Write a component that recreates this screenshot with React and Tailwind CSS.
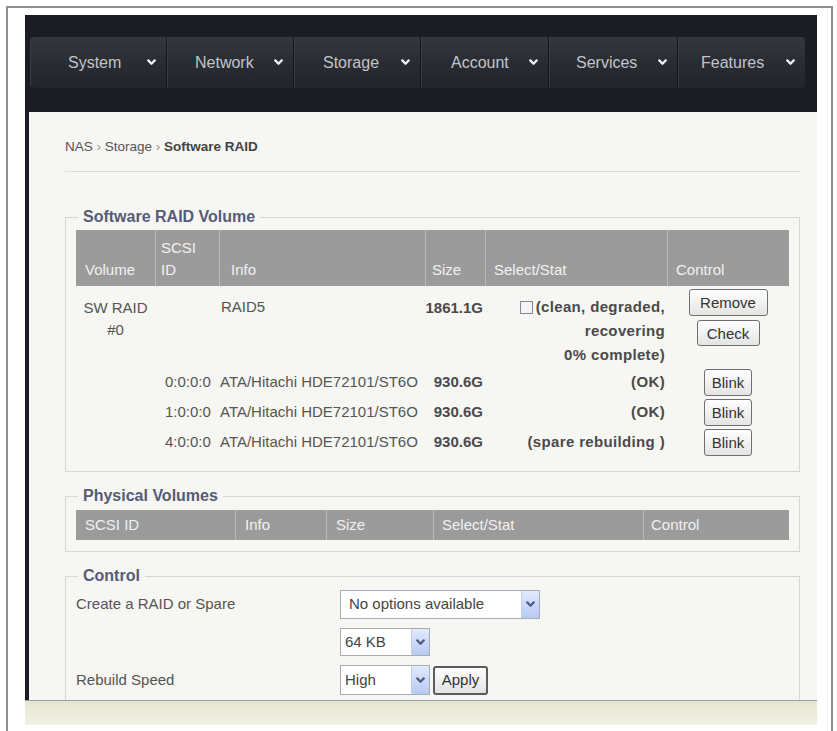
import React from "react";

const Chevron = ({ className = "" }) => (
  <svg width="9" height="7" viewBox="0 0 9 7" className={className}>
    <path
      d="M1.3 1.4 L4.5 4.7 L7.7 1.4"
      fill="none"
      stroke="currentColor"
      strokeWidth="2.3"
      strokeLinecap="round"
      strokeLinejoin="round"
    />
  </svg>
);

const navTabs = [
  { label: "System", cls: "w-[136px] pl-[38px]" },
  { label: "Network", cls: "w-[127px] pl-[28px] border-l border-[#15161b]" },
  { label: "Storage", cls: "w-[127px] pl-[29px] border-l border-[#15161b]" },
  { label: "Account", cls: "w-[128px] pl-[30px] border-l border-[#15161b]" },
  { label: "Services", cls: "w-[129px] pl-[27px] border-l border-[#15161b]" },
  { label: "Features", cls: "w-[128px] pl-[23px] border-l border-[#15161b]" },
];

const Btn = ({ children, className = "" }) => (
  <div
    className={`flex items-center justify-center rounded-[3px] border border-[#6f6f6f] bg-gradient-to-b from-[#ffffff] to-[#e4e4e4] text-[#333] text-[15px] leading-none ${className}`}
  >
    {children}
  </div>
);

const DropBtn = () => (
  <span className="flex h-full w-[18px] items-center justify-center border-l border-[#c3d1ee] bg-gradient-to-b from-[#e2eafc] to-[#b8caf2] text-[#4b5f88]">
    <Chevron />
  </span>
);

const SelectBox = ({ value, className }) => (
  <div className={`flex items-center border border-[#a7adb4] bg-white ${className}`}>
    <span className="flex-1 pl-[4px] text-[15px] text-[#444]">{value}</span>
    <DropBtn />
  </div>
);

const Legend = ({ children }) => (
  <legend className="ml-[2px] px-[5px] text-[16px] leading-[18px] font-bold text-[#575b78]">
    {children}
  </legend>
);

const volCols = "grid grid-cols-[79px_64px_206px_60px_182px_122px]";
const physCols = "grid grid-cols-[159px_91px_107px_210px_146px]";

const disks = [
  { id: "0:0:0:0", stat: "(OK)" },
  { id: "1:0:0:0", stat: "(OK)" },
  { id: "4:0:0:0", stat: "(spare rebuilding )" },
];

export default function App() {
  return (
    <div className="h-[731px] w-[837px] overflow-hidden bg-white font-['Liberation_Sans',Arial,sans-serif]">
      <div className="ml-[6px] mt-[6px] h-[760px] w-[827px] border-2 border-[#8e8e8e] pl-[17px] pt-[7px]">
        <div className="w-[792px]">
          {/* top navigation */}
          <div className="h-[97px] bg-[#1c1d24] pl-[5px] pt-[22px]">
            <div className="flex h-[51px] w-[775px] overflow-hidden rounded-[4px] bg-gradient-to-b from-[#35373f] via-[#2a2c33] to-[#23252b]">
              {navTabs.map((t) => (
                <div
                  key={t.label}
                  className={`flex items-center justify-between pr-[10px] text-[16px] text-[#c2c4c9] shadow-[inset_1px_0_0_#3a3c44] ${t.cls}`}
                >
                  <span>{t.label}</span>
                  <Chevron className="text-[#f0f0f2]" />
                </div>
              ))}
            </div>
          </div>

          {/* page body */}
          <div className="h-[588px] overflow-hidden border-l-4 border-[#1c1d24] bg-[#f6f6f3] pl-[36px] pr-[17px] pt-[27px] text-[15px] text-[#555]">
            <div className="text-[13.5px] leading-[16px] text-[#555]">
              NAS <span className="text-[#999]">›</span> Storage{" "}
              <span className="text-[#999]">›</span>{" "}
              <span className="font-bold text-[#444]">Software RAID</span>
            </div>
            <div className="mt-[16px] h-px bg-[#dcdcdc]" />

            {/* software raid volume */}
            <fieldset className="mt-[36px] border border-[#d6d6d6] px-[10px] pb-[14px]">
              <Legend>Software RAID Volume</Legend>
              <div className={`${volCols} mt-[4px] h-[56px] bg-[#9b9b9b] leading-[22px] text-[#f1f1f1]`}>
                <div className="flex items-end pb-[5px] pl-[9px]">Volume</div>
                <div className="flex flex-col justify-end border-l border-[#bababa] pb-[5px] pl-[5px]">
                  <span>SCSI</span>
                  <span>ID</span>
                </div>
                <div className="flex items-end border-l border-[#bababa] pb-[5px] pl-[11px]">Info</div>
                <div className="flex items-end border-l border-[#bababa] pb-[5px] pl-[6px]">Size</div>
                <div className="flex items-end border-l border-[#bababa] pb-[5px] pl-[8px]">Select/Stat</div>
                <div className="flex items-end border-l border-[#bababa] pb-[5px] pl-[8px]">Control</div>
              </div>

              <div className={volCols}>
                <div className="pt-[11px] text-center leading-[22px]">
                  SW RAID
                  <br />
                  #0
                </div>
                <div />
                <div className="pl-[2px] pt-[9px] leading-[24px]">RAID5</div>
                <div className="pr-[2px] pt-[10px] text-right font-bold leading-[24px] text-[#4a4a4a]">1861.1G</div>
                <div className="pr-[2px] pt-[9px] text-right font-bold leading-[24px] tracking-[0.35px] text-[#4a4a4a]">
                  <div className="flex items-center justify-end">
                    <span className="mr-[3px] inline-block h-[13px] w-[13px] border border-[#7f8a96] bg-[#f4f4f4]" />
                    (clean, degraded,
                  </div>
                  <div>recovering</div>
                  <div>0% complete)</div>
                </div>
                <div className="flex flex-col items-center pt-[3px]">
                  <Btn className="h-[27px] w-[79px]">Remove</Btn>
                  <Btn className="mt-[4px] h-[26px] w-[63px]">Check</Btn>
                </div>
              </div>

              {disks.map((d) => (
                <div key={d.id} className={`${volCols} h-[30px] items-center`}>
                  <div />
                  <div className="pl-[10px]">{d.id}</div>
                  <div className="pl-[1px] whitespace-nowrap">ATA/Hitachi HDE72101/ST6O</div>
                  <div className="pr-[2px] text-right font-bold text-[#4a4a4a]">930.6G</div>
                  <div className="pr-[2px] text-right font-bold tracking-[0.35px] text-[#4a4a4a]">{d.stat}</div>
                  <div className="flex justify-center">
                    <Btn className="h-[27px] w-[48px]">Blink</Btn>
                  </div>
                </div>
              ))}
            </fieldset>

            {/* physical volumes */}
            <fieldset className="mt-[15px] border border-[#d6d6d6] px-[10px] pb-[11px]">
              <Legend>Physical Volumes</Legend>
              <div className={`${physCols} mt-[5px] h-[30px] items-stretch bg-[#9b9b9b] text-[#f1f1f1]`}>
                <div className="flex items-center pl-[9px]">SCSI ID</div>
                <div className="flex items-center border-l border-[#bababa] pl-[9px]">Info</div>
                <div className="flex items-center border-l border-[#bababa] pl-[9px]">Size</div>
                <div className="flex items-center border-l border-[#bababa] pl-[8px]">Select/Stat</div>
                <div className="flex items-center border-l border-[#bababa] pl-[7px]">Control</div>
              </div>
            </fieldset>

            {/* control */}
            <fieldset className="mt-[15px] border border-[#d6d6d6] px-[10px] pb-[12px]">
              <Legend>Control</Legend>
              <div className="mt-[5px] grid grid-cols-[264px_1fr] items-center gap-y-[9px]">
                <div>Create a RAID or Spare</div>
                <SelectBox value="No options available" className="h-[29px] w-[200px] pl-[4px]" />
                <div />
                <SelectBox value="64 KB" className="h-[28px] w-[90px]" />
                <div>Rebuild Speed</div>
                <div className="flex items-center">
                  <SelectBox value="High" className="h-[30px] w-[90px]" />
                  <div className="ml-[3px] flex h-[29px] w-[55px] items-center justify-center rounded-[3px] border-2 border-[#5c5c5c] bg-gradient-to-b from-[#ffffff] to-[#e2e2e2] text-[15px] text-[#333]">
                    Apply
                  </div>
                </div>
              </div>
            </fieldset>
          </div>

          {/* footer band */}
          <div className="h-px bg-[#9d9d9d]" />
          <div className="h-[24px] bg-gradient-to-b from-[#e6e6d2] to-[#f2f2e4]" />
        </div>
      </div>
    </div>
  );
}
